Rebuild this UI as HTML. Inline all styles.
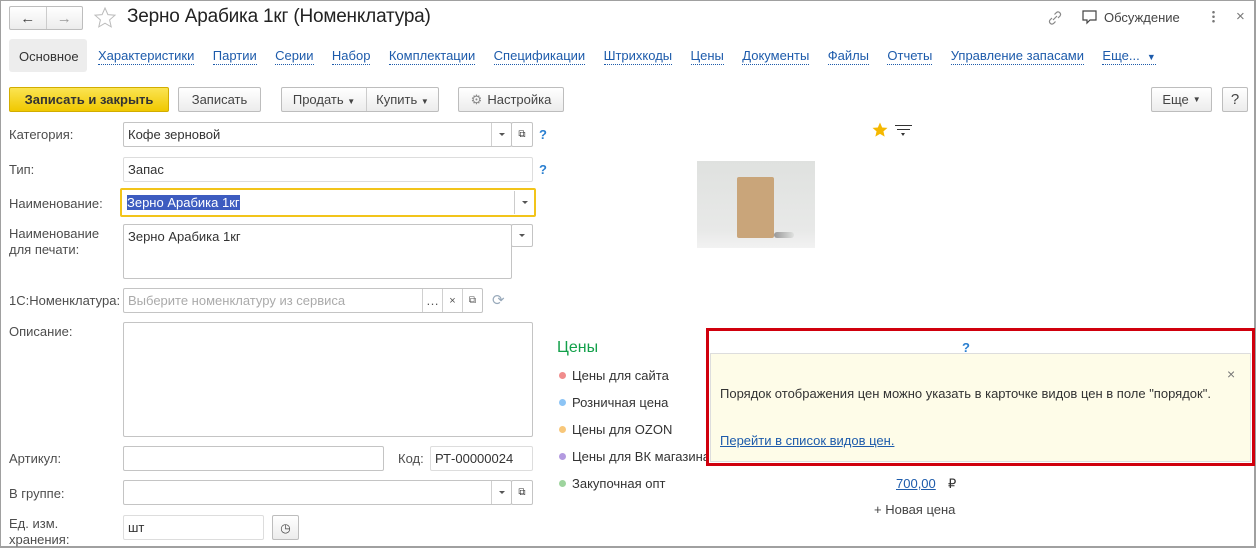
<!DOCTYPE html>
<html><head><meta charset="utf-8"><style>
*{box-sizing:border-box;margin:0;padding:0}
body{width:1256px;height:548px;overflow:hidden;background:#fff;font-family:"Liberation Sans",Arial,sans-serif;font-size:13px;color:#333;position:relative}
.frame{position:absolute;left:0;top:0;width:1256px;height:548px;border:1px solid #a0a0a0;border-width:1px 2px 2px 1px}
.a{position:absolute;white-space:nowrap}
.btn{position:absolute;height:25px;border:1px solid #bdbdbd;border-radius:2px;background:linear-gradient(#fff,#ececec);display:flex;align-items:center;justify-content:center;color:#444;font-size:13px}
.inp{position:absolute;height:25px;border:1px solid #c4c4c4;border-radius:2px;background:#fff;padding:4px 4px;color:#333}
.lnk{color:#1d5bab;border-bottom:1px dotted #1d5bab;line-height:14px;margin-left:18.4px}
.lbl{position:absolute;color:#4d4d4d}
.dd{position:absolute;top:0;width:20px;height:100%;border-left:1px solid #d0d0d0;display:flex;align-items:center;justify-content:center}
.tri{width:0;height:0;border-left:3px solid transparent;border-right:3px solid transparent;border-top:3px solid #555}
.q{position:absolute;color:#2a7fd0;font-size:13px;font-weight:bold}
.dot{position:absolute;width:7px;height:7px;border-radius:50%}
</style></head><body>
<div class="frame"></div>
<div class="btn" style="left:9px;top:6px;width:74px;height:24px;padding:0"><span style="flex:1;text-align:center;font-size:15px;color:#444">&#8592;</span><span style="width:1px;height:22px;background:#ccc"></span><span style="flex:1;text-align:center;font-size:15px;color:#999">&#8594;</span></div>
<svg class="a" style="left:93px;top:6px" width="24" height="24" viewBox="0 0 24 24"><path d="M12 2l2.9 6.6 7.1.6-5.4 4.7 1.6 7-6.2-3.7-6.2 3.7 1.6-7L2 9.2l7.1-.6z" fill="none" stroke="#bbb" stroke-width="1"/></svg>
<div class="a" style="left:127px;top:6px;font-size:19px;color:#222;letter-spacing:-0.2px">Зерно Арабика 1кг (Номенклатура)</div>
<svg class="a" style="left:1046px;top:9px" width="18" height="18" viewBox="0 0 18 18"><path d="M7 11l4-4M6 9l-2 2a2.5 2.5 0 003.5 3.5l2-2M12 9l2-2a2.5 2.5 0 00-3.5-3.5l-2 2" fill="none" stroke="#888" stroke-width="1.2"/></svg>
<svg class="a" style="left:1081px;top:9px" width="18" height="18" viewBox="0 0 18 18"><path d="M2 2h13v9H9l-3 3v-3H2z" fill="none" stroke="#444" stroke-width="1.2"/></svg>
<div class="a" style="left:1104px;top:10px;color:#444">Обсуждение</div>
<div class="a" style="left:1212px;top:10px;width:3px;height:14px;background:radial-gradient(circle,#777 1.2px,transparent 1.4px) 0 0/3px 4.5px"></div>
<div class="a" style="left:1236px;top:8px;color:#777;font-size:15px">×</div>
<div class="a" style="left:9px;top:39px;width:78px;height:33px;background:#ededed;border-radius:3px"></div>
<div class="a" style="left:19px;top:49px;color:#333">Основное</div>
<div class="a" style="left:79.6px;top:49px;display:flex;gap:0">
<span class="lnk">Характеристики</span><span class="lnk">Партии</span><span class="lnk">Серии</span><span class="lnk">Набор</span><span class="lnk">Комплектации</span><span class="lnk">Спецификации</span><span class="lnk">Штрихкоды</span><span class="lnk">Цены</span><span class="lnk">Документы</span><span class="lnk">Файлы</span><span class="lnk">Отчеты</span><span class="lnk">Управление запасами</span><span class="lnk">Еще... &nbsp;<span style="font-size:9px">▼</span></span></div>
<div class="btn" style="left:9px;top:87px;width:160px;background:linear-gradient(#fbe452,#f0c800);border-color:#d2ad00;color:#333;font-weight:bold">Записать и закрыть</div>
<div class="btn" style="left:178px;top:87px;width:83px">Записать</div>
<div class="btn" style="left:281px;top:87px;width:158px;padding:0;justify-content:flex-start"><span style="width:84px;text-align:center">Продать <span style="font-size:8px">▼</span></span><span style="width:1px;height:23px;background:#ccc"></span><span style="flex:1;text-align:center">Купить <span style="font-size:8px">▼</span></span></div>
<div class="btn" style="left:458px;top:87px;width:106px"><span style="color:#888;margin-right:5px">⚙</span>Настройка</div>
<div class="btn" style="left:1151px;top:87px;width:61px">Еще <span style="font-size:8px;margin-left:4px">▼</span></div>
<div class="btn" style="left:1222px;top:87px;width:26px;font-size:15px">?</div>
<div class="lbl" style="left:9px;top:127px">Категория:</div>
<div class="inp" style="left:123px;top:122px;width:389px">Кофе зерновой<div class="dd"style="right:0"><div class="tri"></div></div></div>
<div class="inp" style="left:511px;top:122px;width:22px;padding:0;display:flex;align-items:center;justify-content:center;font-size:10px">⧉</div>
<div class="q" style="left:539px;top:127px">?</div>
<div class="lbl" style="left:9px;top:162px">Тип:</div>
<div class="inp" style="left:123px;top:157px;width:410px;border-color:#ddd">Запас</div>
<div class="q" style="left:539px;top:162px">?</div>
<div class="lbl" style="left:9px;top:196px">Наименование:</div>
<div class="inp" style="left:120px;top:188px;width:416px;height:29px;border:2px solid #f2c41a;padding:5px 5px"><span style="background:#3d5cc0;color:#fff">Зерно Арабика 1кг</span><div class="dd" style="right:0;border-left:1px solid #ccc;height:23px;top:1px"><div class="tri"></div></div></div>
<div class="lbl" style="left:9px;top:226px;line-height:16px">Наименование<br>для печати:</div>
<div class="inp" style="left:123px;top:224px;width:389px;height:55px">Зерно Арабика 1кг</div>
<div class="inp" style="left:511px;top:224px;width:22px;padding:0;height:23px;display:flex;align-items:center;justify-content:center"><div class="tri"></div></div>
<div class="lbl" style="left:9px;top:293px">1С:Номенклатура:</div>
<div class="inp" style="left:123px;top:288px;width:360px;color:#aaa">Выберите номенклатуру из сервиса
<div class="dd" style="right:40px;color:#555">…</div><div class="dd" style="right:20px;color:#555;font-size:11px">×</div><div class="dd" style="right:0;color:#555;font-size:10px">⧉</div></div>
<div class="a" style="left:492px;top:291px;color:#9ab;font-size:15px">⟳</div>
<div class="lbl" style="left:9px;top:324px">Описание:</div>
<div class="inp" style="left:123px;top:322px;width:410px;height:115px"></div>
<div class="lbl" style="left:9px;top:451px">Артикул:</div>
<div class="inp" style="left:123px;top:446px;width:261px"></div>
<div class="lbl" style="left:398px;top:451px">Код:</div>
<div class="inp" style="left:430px;top:446px;width:103px;border-color:#ddd">РТ-00000024</div>
<div class="lbl" style="left:9px;top:486px">В группе:</div>
<div class="inp" style="left:123px;top:480px;width:389px"><div class="dd" style="right:0"><div class="tri"></div></div></div>
<div class="inp" style="left:511px;top:480px;width:22px;padding:0;display:flex;align-items:center;justify-content:center;font-size:10px">⧉</div>
<div class="lbl" style="left:9px;top:516px;line-height:16px">Ед. изм.<br>хранения:</div>
<div class="inp" style="left:123px;top:515px;width:141px;border-color:#ddd">шт</div>
<div class="btn" style="left:272px;top:515px;width:27px;font-size:12px">◷</div>
<svg class="a" style="left:871px;top:121px" width="18" height="18" viewBox="0 0 24 24"><path d="M12 2l2.9 6.6 7.1.6-5.4 4.7 1.6 7-6.2-3.7-6.2 3.7 1.6-7L2 9.2l7.1-.6z" fill="#f5b800"/></svg>
<div class="a" style="left:895px;top:125px;width:17px;height:1px;background:#333"></div>
<div class="a" style="left:897px;top:129px;width:13px;height:1px;background:#333"></div>
<div class="a" style="left:901px;top:133px;border-left:2.5px solid transparent;border-right:2.5px solid transparent;border-top:3px solid #333"></div>
<div class="a" style="left:697px;top:161px;width:118px;height:87px;background:linear-gradient(#dfe1df,#e8e9e8 80%,#f2f2f2)"></div>
<div class="a" style="left:737px;top:177px;width:37px;height:61px;background:#c9a57a;border-radius:2px"></div>
<div class="a" style="left:774px;top:232px;width:20px;height:6px;background:linear-gradient(90deg,#999,#dfe1df);border-radius:3px"></div>
<div class="a" style="left:557px;top:339px;color:#12a04a;font-size:16px">Цены</div>
<div class="dot" style="left:559px;top:372px;background:#f08c8c"></div><div class="a" style="left:572px;top:368px">Цены для сайта</div>
<div class="dot" style="left:559px;top:399px;background:#8cc4f5"></div><div class="a" style="left:572px;top:395px">Розничная цена</div>
<div class="dot" style="left:559px;top:426px;background:#f8c77a"></div><div class="a" style="left:572px;top:422px">Цены для OZON</div>
<div class="dot" style="left:559px;top:453px;background:#b39ae0"></div><div class="a" style="left:572px;top:449px">Цены для ВК магазина</div>
<div class="dot" style="left:559px;top:480px;background:#9ed49e"></div><div class="a" style="left:572px;top:476px">Закупочная опт</div>
<div class="a" style="left:896px;top:476px;color:#1d5bab;text-decoration:underline">700,00</div>
<div class="a" style="left:948px;top:476px">₽</div>
<div class="a" style="left:874px;top:502px;color:#444">+ Новая цена</div>
<div class="a" style="left:706px;top:328px;width:549px;height:138px;border:3px solid #d0000d;background:#fff"></div>
<div class="a" style="left:962px;top:340px;color:#2a7fd0;font-weight:bold">?</div>
<div class="a" style="left:710px;top:353px;width:541px;height:109px;background:#fefce8;border:1px solid #ddd"></div>
<div class="a" style="left:1227px;top:366px;color:#777;font-size:14px">×</div>
<div class="a" style="left:720px;top:386px;color:#333">Порядок отображения цен можно указать в карточке видов цен в поле "порядок".</div>
<div class="a" style="left:720px;top:433px;color:#1d5bab;text-decoration:underline">Перейти в список видов цен.</div>
</body></html>
